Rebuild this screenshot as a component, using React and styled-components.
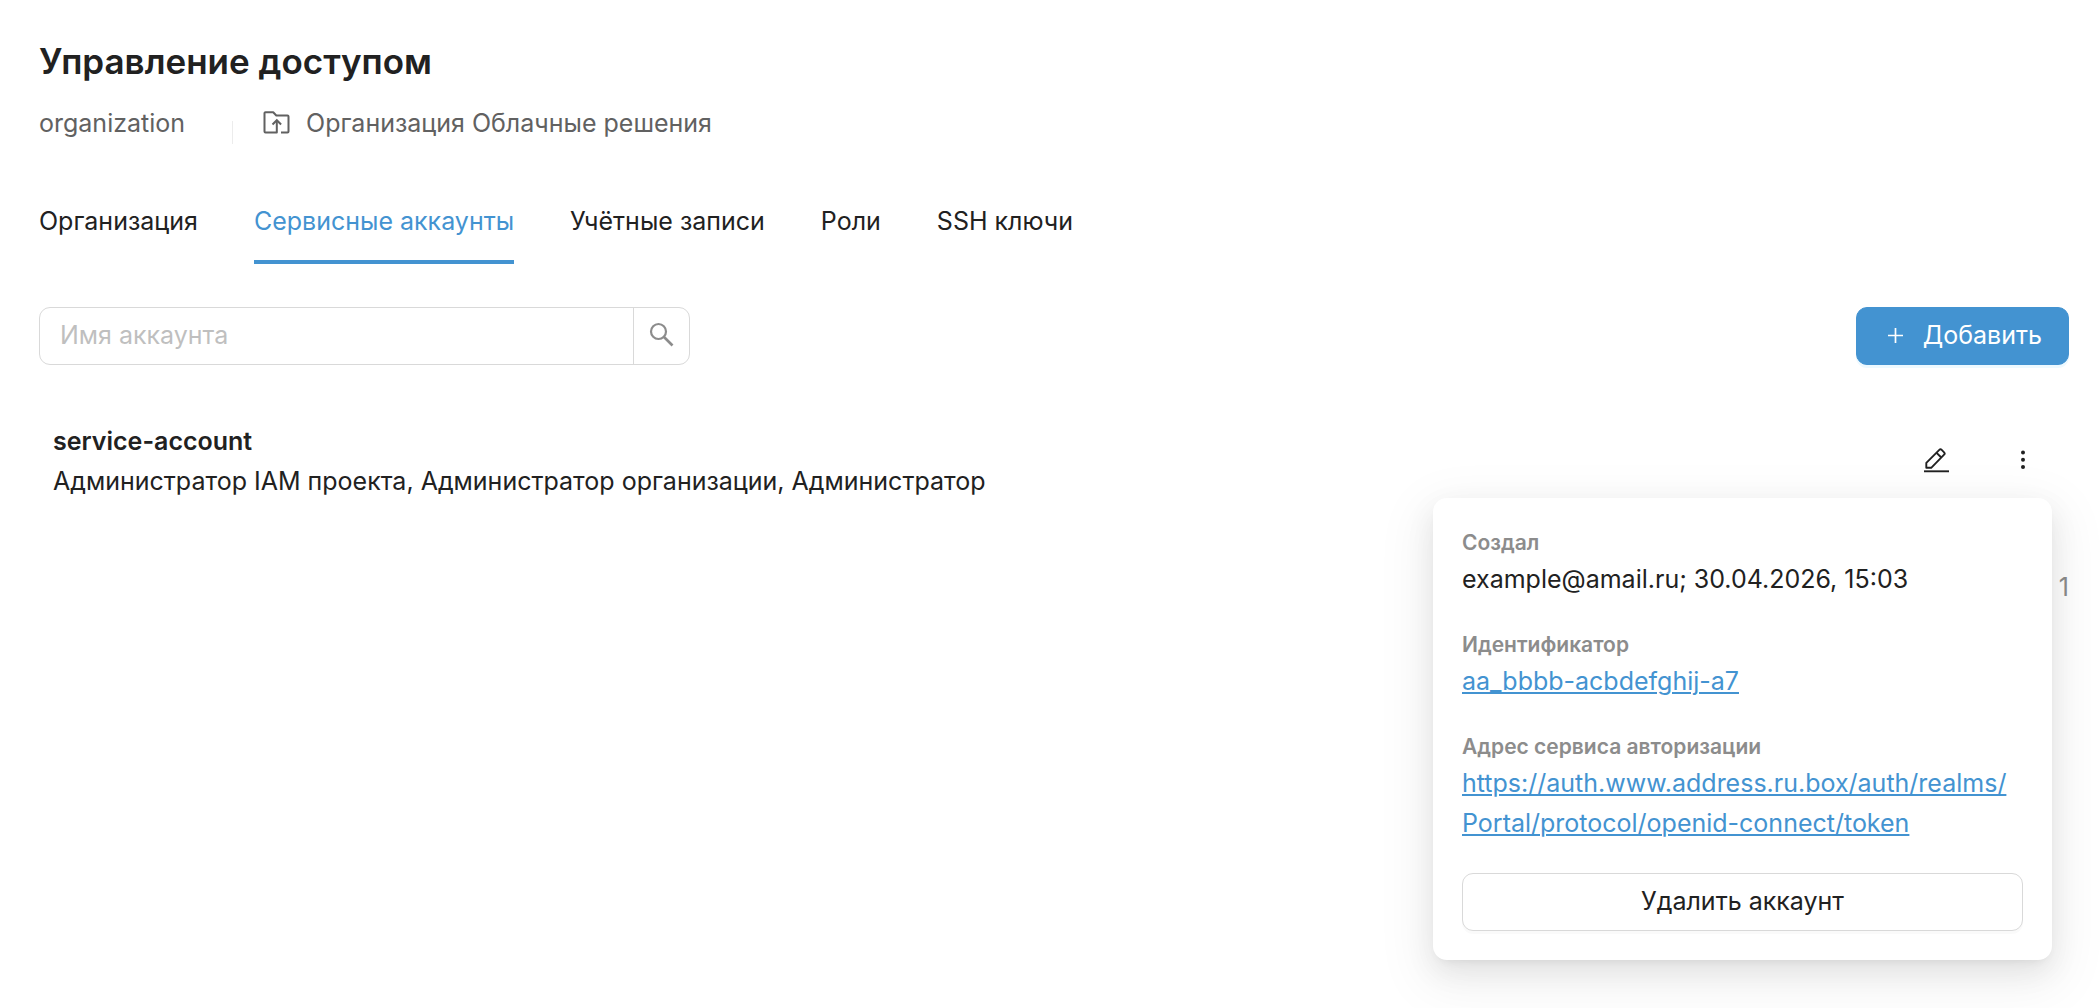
//IMPORTS
//-Modules
import React, { useState } from 'react'
import styled, { createGlobalStyle } from 'styled-components'


//STYLE
const GlobalStyle = createGlobalStyle`
    *{
        box-sizing: border-box;
    }

    body{
        margin: 0;
        background: #fff;
        color: #212121;
        font-family: Inter, 'Liberation Sans', sans-serif;
        font-size: 25px;
        font-weight: 400;
        line-height: 40px;
    }

    button, input{
        font: inherit;
        color: inherit;
    }

    h1, h2, p, dl, dd{
        margin: 0;
    }
`

const Page = styled.main`
    min-height: 100vh;
    padding: 36px 31px 40px 39px;
`

const Title = styled.h1`
    font-size: 35px;
    line-height: 50px;
    font-weight: 600;
`

const SubHeader = styled.div`
    display: flex;
    align-items: center;
    margin-top: 15px;
    color: #616161;
`

const Divider = styled.span`
    width: 1px;
    height: 23px;
    margin: 20px 30px 0 47px;
    background: #ececec;
`

const Project = styled.span`
    display: flex;
    align-items: center;
    gap: 16px;
`

const Tabs = styled.nav`
    display: flex;
    gap: 56px;
    margin-top: 57px;
`

const Tab = styled.a`
    padding-bottom: 19px;
    border-bottom: 4px solid ${({ $active }) => ($active ? '#4393d1' : 'transparent')};
    color: ${({ $active }) => ($active ? '#4393d1' : '#212121')};
    text-decoration: none;
`

const Toolbar = styled.div`
    display: flex;
    justify-content: space-between;
    margin-top: 43px;
`

const Search = styled.form`
    display: flex;
    width: 651px;
    height: 58px;
    border: 1px solid #d9d9d9;
    border-radius: 11px;
    overflow: hidden;

    input{
        flex: 1;
        min-width: 0;
        padding: 0 20px 2px;
        border: 0;
        outline: none;
        background: none;

        &::placeholder{
            color: #bfbfbf;
            opacity: 1;
        }
    }

    button{
        display: flex;
        align-items: center;
        justify-content: center;
        width: 56px;
        padding: 0 0 4px;
        border: 0;
        border-left: 1px solid #d9d9d9;
        background: none;
        color: #8c8c8c;
        cursor: pointer;
    }
`

const Button = styled.button`
    display: flex;
    align-items: center;
    justify-content: center;
    gap: 15px;
    width: ${({ $block }) => ($block ? '100%' : 'auto')};
    height: 58px;
    padding: 0 26px 2px;
    border: 1px solid ${({ $primary }) => ($primary ? '#4393d1' : '#d9d9d9')};
    border-radius: 11px;
    background: ${({ $primary }) => ($primary ? '#4393d1' : '#fff')};
    color: ${({ $primary }) => ($primary ? '#fff' : '#212121')};
    box-shadow: 0 3px 0 ${({ $primary }) => ($primary ? '#edf9ff' : 'rgba(0, 0, 0, .02)')};
    cursor: pointer;
`

const Row = styled.section`
    display: flex;
    align-items: center;
    justify-content: space-between;
    margin-top: 56px;
    padding: 0 17px 0 14px;

    h2{
        font-size: 25px;
        line-height: 40px;
        font-weight: 600;
    }
`

const Actions = styled.div`
    display: flex;
    gap: 29px;
`

const IconButton = styled.button`
    display: flex;
    align-items: center;
    justify-content: center;
    width: 58px;
    height: 58px;
    padding: 0 0 2px;
    border: 0;
    background: none;
    cursor: pointer;
`

const Menu = styled.div`
    position: relative;
`

const Popover = styled.div`
    position: absolute;
    top: calc(100% + 8px);
    right: 0;
    z-index: 1;
    width: 619px;
    padding: 28px 29px 29px;
    border-radius: 14px;
    background: #fff;
    box-shadow:
        0 11px 29px rgba(0, 0, 0, .08),
        0 5px 11px -7px rgba(0, 0, 0, .12),
        0 16px 50px 14px rgba(0, 0, 0, .05);

    dt{
        color: #8c8c8c;
        font-size: 21px;
        line-height: 33px;
        font-weight: 600;
    }

    dd{
        margin-bottom: 29px;
    }

    dd:last-child{
        margin-bottom: 30px;
    }

    a{
        color: #4393d1;
        text-decoration: underline 2px;
        text-underline-offset: 2px;
    }
`

const Total = styled.p`
    margin-top: 66px;
    color: #8c8c8c;
    text-align: right;
`


//ICONS
const FolderIcon = () => (
    <svg width="27" height="23" viewBox="0 0 27 23" fill="none" stroke="currentColor" strokeWidth="2" strokeLinejoin="round" aria-hidden="true">
        <path d="M18 21.5h6.500a1 1 0 0 0 1-1v-15a1 1 0 0 0-1-1H13.300L10.200 1.200H2.500a1 1 0 0 0-1 1v18.300a1 1 0 0 0 1 1h11.300V10" />
        <path d="M9.500 13.500l4.300-4.300 4.300 4.300" strokeLinejoin="miter" />
    </svg>
)

const SearchIcon = () => (
    <svg width="25" height="25" viewBox="0 0 25 25" fill="none" stroke="currentColor" strokeWidth="2.200" aria-hidden="true">
        <circle cx="9.500" cy="9.500" r="7.500" />
        <path d="M15 15l8.500 8.500" strokeWidth="2.600" />
    </svg>
)

const PlusIcon = () => (
    <svg width="25" height="25" viewBox="0 0 25 25" fill="none" stroke="currentColor" strokeWidth="1.700" aria-hidden="true">
        <path d="M12.500 5v15M5 12.500h15" />
    </svg>
)

const EditIcon = () => (
    <svg width="25" height="25" viewBox="0 0 25 25" fill="none" stroke="currentColor" strokeWidth="1.900" aria-hidden="true">
        <path d="M2.300 19.800v-5L15.300 1.900a1.700 1.700 0 0 1 2.400 0l2.400 2.400a1.700 1.700 0 0 1 0 2.400L7.200 19.800z" strokeLinejoin="round" />
        <path d="M12.600 4.800l4.700 4.700" />
        <path d="M0 23.300h25" />
    </svg>
)

const MoreIcon = () => (
    <svg width="20" height="20" viewBox="0 0 20 20" fill="currentColor" aria-hidden="true">
        <circle cx="10" cy="2.500" r="2" />
        <circle cx="10" cy="9.800" r="2" />
        <circle cx="10" cy="17" r="2" />
    </svg>
)


//MAIN COMPONENT
const tabs = ['Организация', 'Сервисные аккаунты', 'Учётные записи', 'Роли', 'SSH ключи']

const App = () => {

    const [active, setActive] = useState(tabs[1])
    const [open, setOpen] = useState(true)

  return (
    <>
        <GlobalStyle />
        <Page>
            <Title>Управление доступом</Title>

            <SubHeader>
                <span>organization</span>
                <Divider />
                <Project>
                    <FolderIcon />
                    Организация Облачные решения
                </Project>
            </SubHeader>

            <Tabs>
                {tabs.map(tab => (
                    <Tab key={tab} href="#" $active={tab === active} onClick={() => setActive(tab)}>
                        {tab}
                    </Tab>
                ))}
            </Tabs>

            <Toolbar>
                <Search onSubmit={e => e.preventDefault()}>
                    <input type="text" placeholder="Имя аккаунта" aria-label="Имя аккаунта" />
                    <button type="submit" aria-label="Найти"><SearchIcon /></button>
                </Search>
                <Button type="button" $primary>
                    <PlusIcon />
                    Добавить
                </Button>
            </Toolbar>

            <Row>
                <div>
                    <h2>service-account</h2>
                    <p>Администратор IAM проекта, Администратор организации, Администратор</p>
                </div>

                <Actions>
                    <IconButton type="button" aria-label="Редактировать"><EditIcon /></IconButton>
                    <Menu>
                        <IconButton type="button" aria-label="Ещё" aria-expanded={open} onClick={() => setOpen(!open)}>
                            <MoreIcon />
                        </IconButton>
                        {open && (
                            <Popover>
                                <dl>
                                    <dt>Создал</dt>
                                    <dd>example@amail.ru; 30.04.2026, 15:03</dd>
                                    <dt>Идентификатор</dt>
                                    <dd><a href="#">aa_bbbb-acbdefghij-a7</a></dd>
                                    <dt>Адрес сервиса авторизации</dt>
                                    <dd>
                                        <a href="#">https://auth.www.address.ru.box/auth/realms/<wbr />Portal/protocol/openid-connect/token</a>
                                    </dd>
                                </dl>
                                <Button type="button" $block>Удалить аккаунт</Button>
                            </Popover>
                        )}
                    </Menu>
                </Actions>
            </Row>

            <Total>1</Total>
        </Page>
    </>
  )
}
export default App
